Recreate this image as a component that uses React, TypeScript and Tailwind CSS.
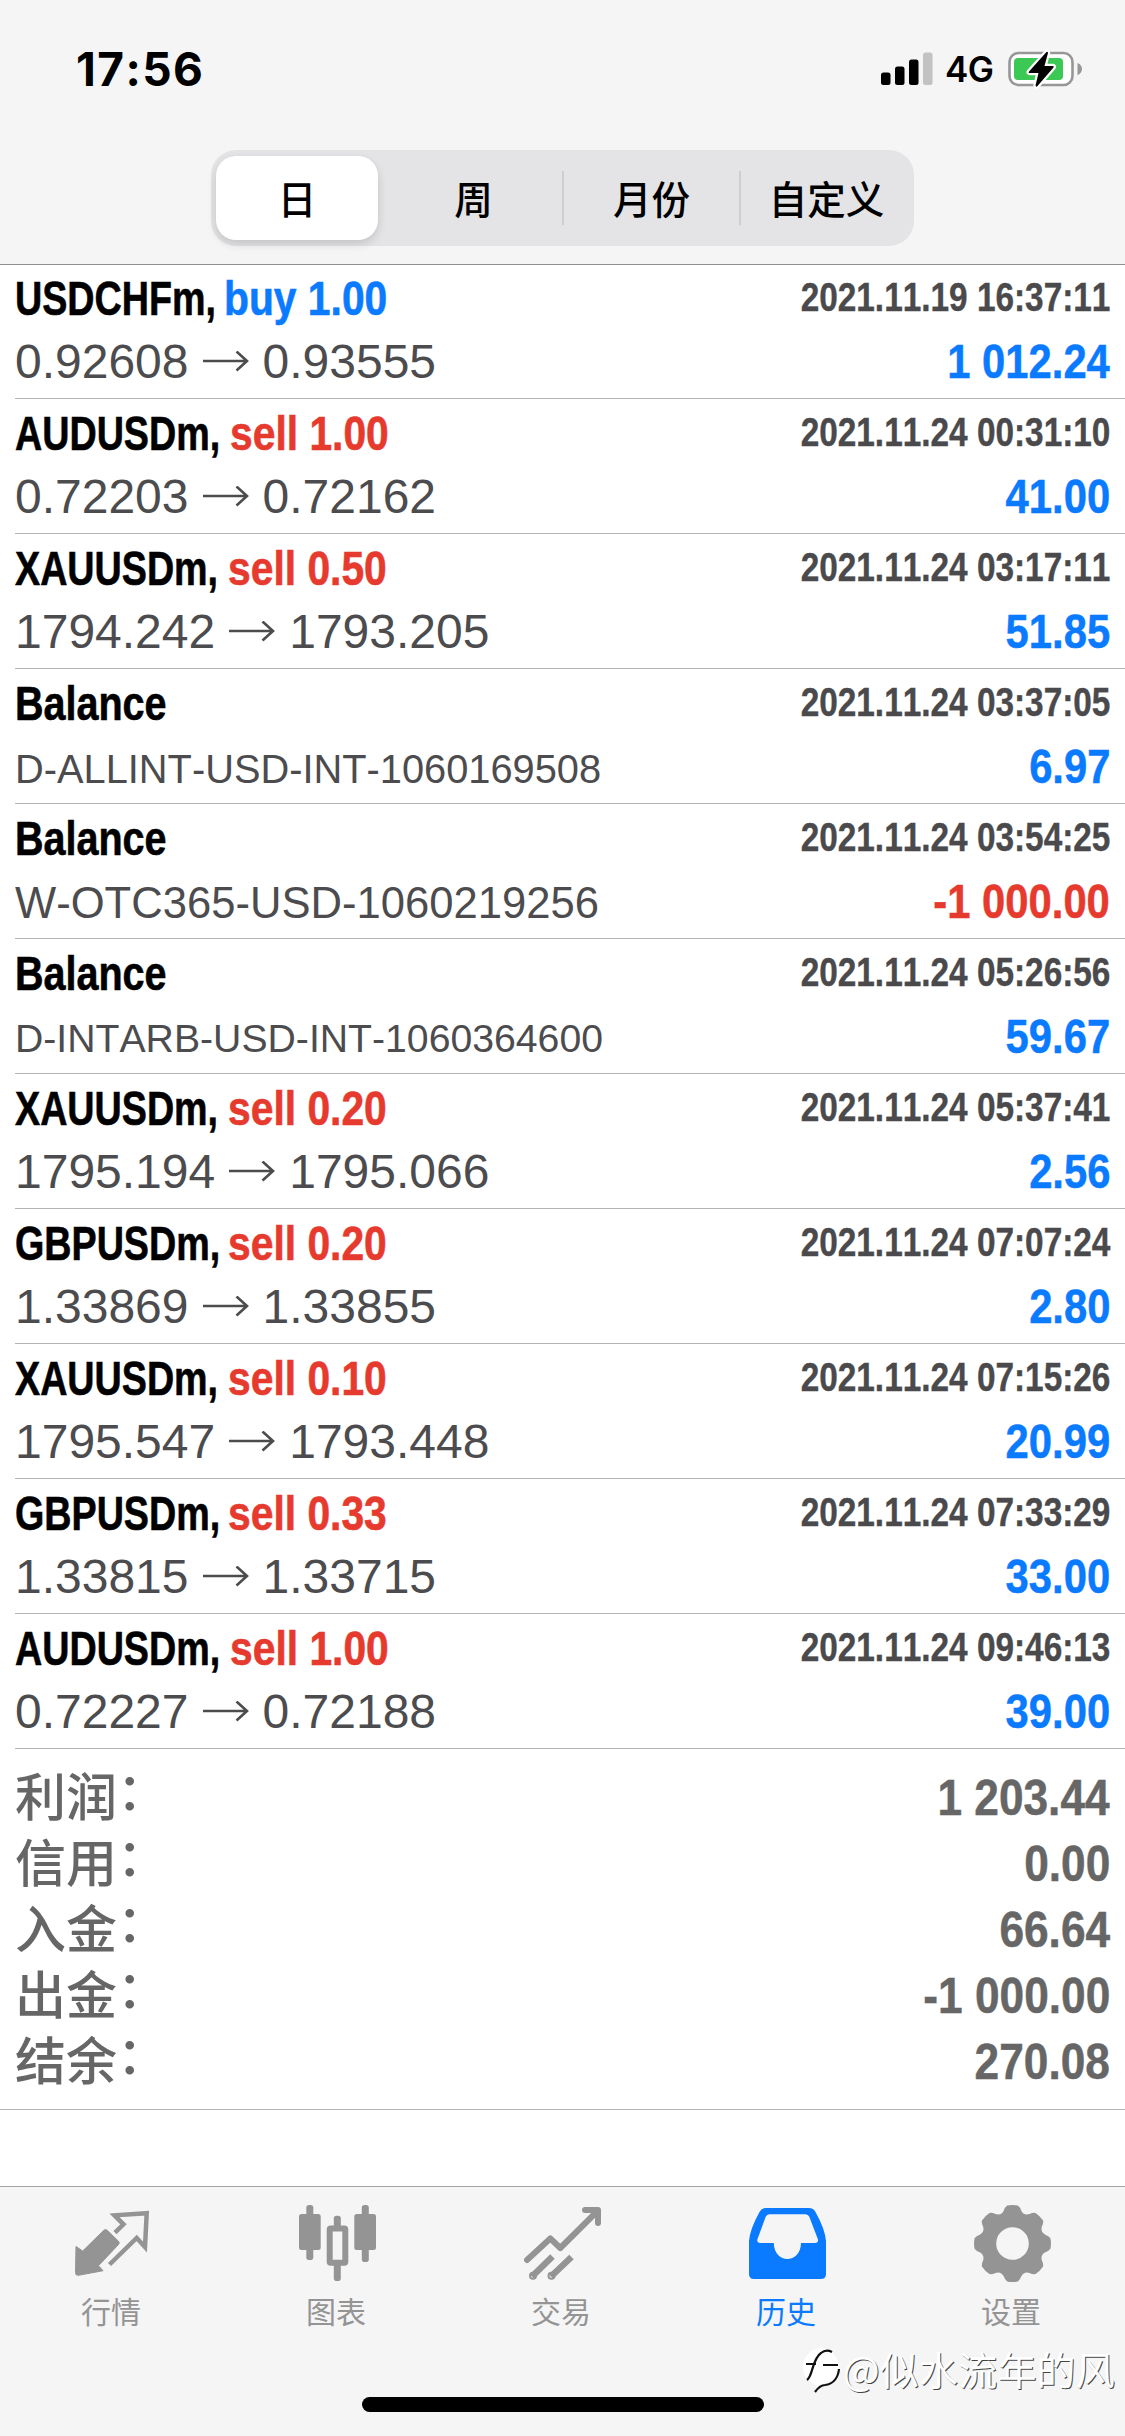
import React from "react";

type Tone = "blue" | "red";
type Row = {
  title: string;
  titleBox?: string;
  action?: string;
  tone?: Tone;
  time: string;
  from?: string;
  to?: string;
  note?: string;
  noteSize?: string;
  amount: string;
  amountTone: Tone;
};

const TONES: Record<Tone, string> = { blue: "text-[#0a7aff]", red: "text-[#e63a2e]" };

const ROWS: Row[] = [
  { title: "USDCHFm,", titleBox: "w-[209px]", action: "buy 1.00", tone: "blue", time: "2021.11.19 16:37:11", from: "0.92608", to: "0.93555", amount: "1 012.24", amountTone: "blue" },
  { title: "AUDUSDm,", titleBox: "w-[215px]", action: "sell 1.00", tone: "red", time: "2021.11.24 00:31:10", from: "0.72203", to: "0.72162", amount: "41.00", amountTone: "blue" },
  { title: "XAUUSDm,", titleBox: "w-[213px]", action: "sell 0.50", tone: "red", time: "2021.11.24 03:17:11", from: "1794.242", to: "1793.205", amount: "51.85", amountTone: "blue" },
  { title: "Balance", time: "2021.11.24 03:37:05", note: "D-ALLINT-USD-INT-1060169508", noteSize: "mt-[11px] text-[39.8px]", amount: "6.97", amountTone: "blue" },
  { title: "Balance", time: "2021.11.24 03:54:25", note: "W-OTC365-USD-1060219256", noteSize: "mt-[10px] text-[43.6px]", amount: "-1 000.00", amountTone: "red" },
  { title: "Balance", time: "2021.11.24 05:26:56", note: "D-INTARB-USD-INT-1060364600", noteSize: "mt-[11px] text-[39.2px]", amount: "59.67", amountTone: "blue" },
  { title: "XAUUSDm,", titleBox: "w-[213px]", action: "sell 0.20", tone: "red", time: "2021.11.24 05:37:41", from: "1795.194", to: "1795.066", amount: "2.56", amountTone: "blue" },
  { title: "GBPUSDm,", titleBox: "w-[213px]", action: "sell 0.20", tone: "red", time: "2021.11.24 07:07:24", from: "1.33869", to: "1.33855", amount: "2.80", amountTone: "blue" },
  { title: "XAUUSDm,", titleBox: "w-[213px]", action: "sell 0.10", tone: "red", time: "2021.11.24 07:15:26", from: "1795.547", to: "1793.448", amount: "20.99", amountTone: "blue" },
  { title: "GBPUSDm,", titleBox: "w-[213px]", action: "sell 0.33", tone: "red", time: "2021.11.24 07:33:29", from: "1.33815", to: "1.33715", amount: "33.00", amountTone: "blue" },
  { title: "AUDUSDm,", titleBox: "w-[215px]", action: "sell 1.00", tone: "red", time: "2021.11.24 09:46:13", from: "0.72227", to: "0.72188", amount: "39.00", amountTone: "blue" },
];

const SUMMARY = [
  ["利润", "1 203.44"],
  ["信用", "0.00"],
  ["入金", "66.64"],
  ["出金", "-1 000.00"],
  ["结余", "270.08"],
];

function StatusBar() {
  return (
    <div className="flex h-[150px] items-start justify-between pr-[42px] pl-[76px] pt-[40px]">
      <div className="font-['Inter',sans-serif] text-[46px] leading-[58px] font-bold tracking-[1.4px] text-black">17:56</div>
      <div className="flex h-[58px] items-center">
        <svg width="52" height="34" viewBox="0 0 52 34" className="mr-[12px]">
          <rect x="0" y="20.5" width="9.5" height="12.5" rx="2.5" />
          <rect x="14" y="14.5" width="9.5" height="18.5" rx="2.5" />
          <rect x="28" y="7.5" width="9.5" height="25.5" rx="2.5" />
          <rect x="42" y="0.5" width="9.5" height="32.5" rx="2.5" fill="#c2c2c2" />
        </svg>
        <div className="w-[63px] font-['Inter',sans-serif] text-[35px] leading-[44px] font-semibold tracking-[-0.5px] text-black">4G</div>
        <svg width="75" height="40" viewBox="0 0 75 40">
          <rect x="1.5" y="4" width="63" height="32" rx="9" fill="#fff" stroke="#97979a" strokeWidth="2.6" />
          <rect x="6" y="9" width="49" height="22" rx="4" fill="#3bc855" />
          <path d="M69.5 14c6 2.2 6 10 0 12.2z" fill="#97979a" />
          <path d="M38.500 3 21 22.500q-1 1.500 1 1.500h8.500L27.500 36.500q.5 2 2 .5L45.500 18.500q1-1.500-1-1.500h-8L40 4q-.3-2-1.500-1z" fill="#000" stroke="#fff" strokeWidth="4.5" paintOrder="stroke" strokeLinejoin="round" />
        </svg>
      </div>
    </div>
  );
}

function Segments() {
  return (
    <div className="mx-auto flex h-[96px] w-[703px] rounded-[25px] bg-[#e4e4e6] font-['Noto_Sans_CJK_SC',sans-serif] text-[38.5px] leading-[54px] font-medium text-black">
      <div className="flex w-[174px] items-center py-[6px] pl-[5px]">
        <div className="flex h-full w-[162px] items-center justify-center rounded-[20px] bg-white pb-[3px] shadow-[0_4px_10px_rgba(0,0,0,0.14)]">日</div>
      </div>
      <div className="flex w-[177px] items-center justify-center pb-[3px]">周</div>
      <div className="my-[21px] w-[2px] bg-[#cececf]" />
      <div className="flex w-[175px] items-center justify-center pb-[3px]">月份</div>
      <div className="my-[21px] w-[2px] bg-[#cececf]" />
      <div className="flex w-[173px] items-center justify-center pr-[2px] pb-[3px]">自定义</div>
    </div>
  );
}

function HistoryRow({ row }: { row: Row }) {
  return (
    <div className="ml-[15px] flex h-[135px] justify-between border-b border-[#b4b4b8] pr-[15px] whitespace-nowrap">
      <div className="pt-[8px] text-[48px] leading-[54px]">
        <div className="flex font-bold [-webkit-text-stroke:0.6px_currentColor]">
          {row.action ? (
            <>
              <div className={row.titleBox}>
                <span className="inline-block origin-left scale-x-[0.785] text-black">{row.title}</span>
              </div>
              <div className={`origin-left scale-x-[0.85] ${TONES[row.tone ?? "blue"]}`}>{row.action}</div>
            </>
          ) : (
            <div className="origin-left scale-x-[0.823] text-black">{row.title}</div>
          )}
        </div>
        {row.note ? (
          <div className={`leading-[54px] text-[#4c4c4f] ${row.noteSize}`}>{row.note}</div>
        ) : (
          <div className="mt-[9px] flex items-center text-[#4c4c4f]">
            <span>{row.from}</span>
            <svg width="46" height="22" viewBox="0 0 46 22" className="mx-[14px]" fill="none" stroke="currentColor" strokeWidth="2.6">
              <path d="M0 10h44M33.5 0.5 44 10 33.5 19.5" />
            </svg>
            <span>{row.to}</span>
          </div>
        )}
      </div>
      <div className="flex flex-col items-end pt-[6px] font-bold">
        <div className="origin-right scale-x-[0.834] text-[40px] leading-[54px] text-[#4a4a4d] [-webkit-text-stroke:0.4px_currentColor]">{row.time}</div>
        <div className={`mt-[11px] origin-right scale-x-[0.87] text-[48px] leading-[54px] [-webkit-text-stroke:0.5px_currentColor] ${TONES[row.amountTone]}`}>{row.amount}</div>
      </div>
    </div>
  );
}

function Summary() {
  return (
    <div className="h-[361px] border-b border-[#b4b4b8] pt-[16px]">
      {SUMMARY.map(([label, value]) => (
        <div key={label} className="flex h-[66px] items-start justify-between px-[15px] text-[#666]">
          <div className="-mt-[4px] flex font-['Noto_Sans_CJK_SC',sans-serif] text-[51px] leading-[66px] font-medium">
            {label}
            <span className="-mt-[6px]">：</span>
          </div>
          <div className="origin-right scale-x-[0.885] text-[50px] leading-[66px] font-bold [-webkit-text-stroke:0.5px_currentColor]">{value}</div>
        </div>
      ))}
    </div>
  );
}

function gearPath() {
  const p = (deg: number, r: number) => {
    const a = (deg * Math.PI) / 180;
    return `${(38.5 + r * Math.sin(a)).toFixed(2)} ${(38.5 - r * Math.cos(a)).toFixed(2)}`;
  };
  let d = `M${p(-8, 38.3)}`;
  for (let i = 0; i < 8; i++) {
    const a = i * 45;
    d += `Q${p(a, 39)} ${p(a + 8, 38.3)}Q${p(a + 12, 37)} ${p(a + 15, 34)}Q${p(a + 22.5, 30)} ${p(a + 30, 34)}Q${p(a + 33, 37)} ${p(a + 37, 38.3)}`;
  }
  return d + "ZM38.5 22.2a16.3 16.3 0 1 0 0 32.6a16.3 16.3 0 1 0 0-32.6Z";
}

const TABS: { label: string; active?: boolean; icon: React.ReactNode }[] = [
  {
    label: "行情",
    icon: (
      <>
        <path d="M2 41.5 8.7 46 29.8 25.3q1.7-1.5 3.400 0L44.5 36.2q1.5 1.7 0 3.3L24.5 60.700 29 65.700 4.500 70.300q-3 .4-3-2.500z" fill="currentColor" stroke="currentColor" strokeLinejoin="round" />
        <path d="M41 27.700 49.500 19.300 40.500 10.300 72.700 8.200 71 42 62.700 33 35.500 59.500" fill="none" stroke="currentColor" strokeWidth="4.500" />
      </>
    ),
  },
  {
    label: "图表",
    icon: (
      <g fill="currentColor">
        <rect x="0" y="9" width="21.7" height="36" rx="2.5" />
        <rect x="7.3" y="0" width="7" height="55" rx="2.8" />
        <rect x="55.3" y="9" width="21.7" height="36" rx="2.5" />
        <rect x="62.8" y="0" width="7" height="57" rx="2.8" />
        <rect x="34.8" y="10.7" width="7" height="13" rx="2.8" />
        <rect x="34.8" y="57" width="7" height="19" rx="2.8" />
        <rect x="30.7" y="23.5" width="15.6" height="34.3" rx="1" fill="none" stroke="currentColor" strokeWidth="6" />
      </g>
    ),
  },
  {
    label: "交易",
    icon: (
      <g fill="none" stroke="currentColor" strokeWidth="6">
        <path d="M3 55 26.3 33.5 36.3 43 73 6.5M61 5h13v13" strokeLinecap="round" strokeLinejoin="round" />
        <path d="M8 71.5 28.5 51.5M27 71.5 47.5 52" strokeWidth="6.5" />
        <circle cx="9" cy="70.8" r="1" />
        <circle cx="27.5" cy="70.8" r="1" />
      </g>
    ),
  },
  {
    label: "历史",
    active: true,
    icon: (
      <path fillRule="evenodd" fill="currentColor" d="M17 3h43q4.500 0 6.500 4Q76 24 77 36v33q0 5-5 5H5q-5 0-5-5V36Q1 24 10.500 7 12.500 3 17 3ZM20.500 9.300q-2.800 0-3.800 2.500L8.500 34q-1.200 4 3 4h13.300c.3 21.300 26.900 21.300 27.200 0h13.800q4.200 0 3-4L60.300 11.800q-1-2.500-3.800-2.500Z" />
    ),
  },
  { label: "设置", icon: <path fillRule="evenodd" fill="currentColor" d={gearPath()} /> },
];

function TabBar() {
  return (
    <div className="relative h-[250px] border-t border-[#a3a3a5] bg-[#f5f5f5]">
      <div className="flex h-[210px] pt-[18px]">
        {TABS.map((tab) => (
          <div key={tab.label} className={`flex w-[225px] flex-col items-center ${tab.active ? "text-[#0a7aff]" : "text-[#949494]"}`}>
            <svg width="77" height="77" viewBox="0 0 77 77">{tab.icon}</svg>
            <div className="mt-[7px] pr-[3px] font-['Noto_Sans_CJK_SC',sans-serif] text-[30px] leading-[42px]">{tab.label}</div>
          </div>
        ))}
      </div>
      <div className="mx-auto h-[15px] w-[402px] rounded-full bg-black" />
      <div className="absolute top-[154px] right-[10px] flex items-center">
        <svg width="42" height="50" viewBox="0 0 42 50" fill="none">
          <path d="M20 5a19 19 0 0 1 5 37q-6 1-11 7l1-7A19 19 0 0 1 20 5z" fill="#fff" />
          <path d="M5 21h10M22 22h15M6 37C12 33 11 16 20 10q5-4 11-1M38 26c-1 10-7 15-14 16q-5 0-10 7" stroke="#111" strokeWidth="2.2" />
        </svg>
        <div className="font-['Noto_Sans_CJK_SC',sans-serif] text-[39px] leading-[54px] tracking-[0.2px] text-white [text-shadow:1px_1px_0_#444]">@似水流年的风</div>
      </div>
    </div>
  );
}

export default function App() {
  return (
    <div className="flex h-[2436px] w-[1125px] flex-col overflow-hidden bg-white font-['Liberation_Sans',Arial,sans-serif] [font-kerning:none]">
      <header className="h-[265px] border-b border-[#8e8e90] bg-[#f5f5f5]">
        <StatusBar />
        <Segments />
      </header>
      <main className="flex-1">
        <div className="-mt-px">
          {ROWS.map((row) => (
            <HistoryRow key={row.time} row={row} />
          ))}
        </div>
        <Summary />
      </main>
      <TabBar />
    </div>
  );
}
